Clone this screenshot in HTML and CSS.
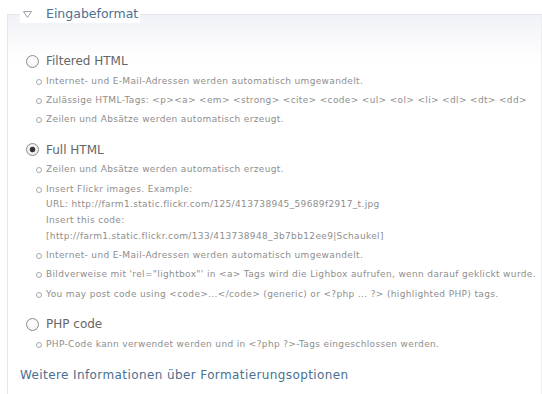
FILE: index.html
```html
<!DOCTYPE html>
<html lang="de">
<head>
<meta charset="utf-8">
<title>Eingabeformat</title>
<link rel="stylesheet" href="styles.css">
</head>
<body>
<fieldset class="filter-box">
  <legend class="filter-legend">
    <svg class="toggle" width="9" height="7" viewBox="0 0 9 7"><path d="M0.5 0.5 H8.5 L4.5 6.5 Z" fill="none" stroke="#a0a4ac" stroke-width="1"/></svg>
    <span>Eingabeformat</span>
  </legend>

  <div class="format">
    <label class="format-label"><input type="radio" name="format" class="radio"> Filtered HTML</label>
    <ul class="tips">
      <li>Internet- und E-Mail-Adressen werden automatisch umgewandelt.</li>
      <li>Zulässige HTML-Tags: &lt;p&gt;&lt;a&gt; &lt;em&gt; &lt;strong&gt; &lt;cite&gt; &lt;code&gt; &lt;ul&gt; &lt;ol&gt; &lt;li&gt; &lt;dl&gt; &lt;dt&gt; &lt;dd&gt;</li>
      <li>Zeilen und Absätze werden automatisch erzeugt.</li>
    </ul>
  </div>

  <div class="format">
    <label class="format-label"><input type="radio" name="format" class="radio" checked> Full HTML</label>
    <ul class="tips">
      <li>Zeilen und Absätze werden automatisch erzeugt.</li>
      <li>Insert Flickr images. Example:<br>URL: http://farm1.static.flickr.com/125/413738945_59689f2917_t.jpg<br>Insert this code:<br>[http://farm1.static.flickr.com/133/413738948_3b7bb12ee9|Schaukel]</li>
      <li>Internet- und E-Mail-Adressen werden automatisch umgewandelt.</li>
      <li>Bildverweise mit 'rel="lightbox"' in &lt;a&gt; Tags wird die Lighbox aufrufen, wenn darauf geklickt wurde.</li>
      <li>You may post code using &lt;code&gt;...&lt;/code&gt; (generic) or &lt;?php ... ?&gt; (highlighted PHP) tags.</li>
    </ul>
  </div>

  <div class="format">
    <label class="format-label"><input type="radio" name="format" class="radio"> PHP code</label>
    <ul class="tips">
      <li>PHP-Code kann verwendet werden und in &lt;?php ?&gt;-Tags eingeschlossen werden.</li>
    </ul>
  </div>

  <p class="more"><a href="#">Weitere Informationen über Formatierungsoptionen</a></p>
</fieldset>
</body>
</html>
```

FILE: styles.css
```css
html, body {
  margin: 0;
  padding: 0;
  background: #fff;
}

body {
  font-family: "DejaVu Sans", Verdana, sans-serif;
  width: 542px;
  height: 394px;
  overflow: hidden;
}

.filter-box {
  margin: 5px 0 0 7px;
  padding: 29px 0 0 12px;
  border: 1px solid #e4e6ec;
  border-right: 1px solid #eceef2;
  border-bottom: none;
  background: linear-gradient(to bottom, #f1f2f6 0px, #ffffff 45px);
  min-width: 0;
}

.filter-legend {
  padding: 0 2px 0 2px;
  margin-left: 0;
  line-height: 18px;
  font-size: 12.5px;
  color: #4f7090;
  background: #fff;
  display: flex;
  align-items: center;
}

.toggle {
  display: block;
  margin: 0 14px 0 1px;
}

.format {
  margin-bottom: 13px;
}

.format-label {
  display: flex;
  align-items: center;
  height: 18px;
  line-height: 18px;
  font-size: 12px;
  color: #666;
  padding-left: 6px;
}

.radio {
  appearance: none;
  -webkit-appearance: none;
  width: 13px;
  height: 13px;
  margin: 0 7px 0 0;
  border: 1px solid #8d8d8d;
  border-radius: 50%;
  background: radial-gradient(circle at 50% 40%, #ffffff 0%, #f6f6f6 60%, #e4e4e4 100%);
  box-sizing: border-box;
  position: relative;
}

.radio:checked {
  background: radial-gradient(circle, #2e2e2e 0, #3a3a3a 2.5px, #f4f4f4 3.2px, #e6e6e6 100%);
}

.tips {
  list-style: none;
  margin: 3.5px 0 0 0;
  padding: 0 0 0 26px;
  font-size: 9px;
  letter-spacing: 0.35px;
  color: #8e8e8e;
}

.tips li {
  position: relative;
  line-height: 15.75px;
  margin-bottom: 3.5px;
}

.tips li::before {
  content: "";
  position: absolute;
  left: -10px;
  top: 5px;
  width: 6px;
  height: 6px;
  border: 1px solid #a8a8a8;
  border-radius: 50%;
  box-sizing: border-box;
}

.more {
  margin: 6px 0 0 0;
  line-height: 18px;
  font-size: 12px;
  letter-spacing: 0.4px;
  padding-bottom: 20px;
}

.more a {
  color: #4a6f8f;
  text-decoration: none;
}
```
